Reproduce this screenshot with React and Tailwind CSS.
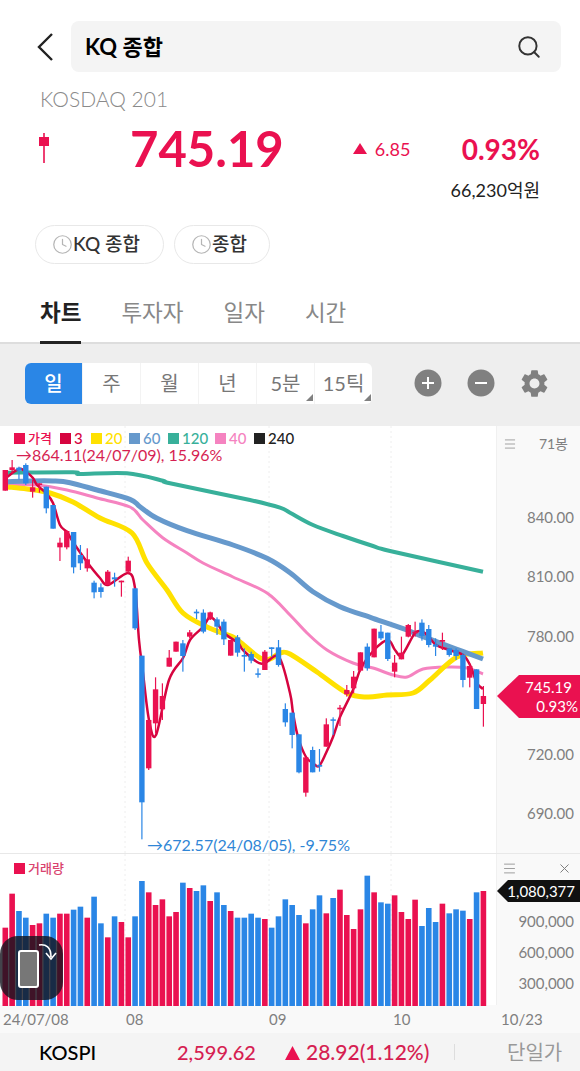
import React from "react";
import { Search, Clock, X, Menu } from "lucide-react";
import { MdSettings } from "react-icons/md";

const RED = "#ea1150";
const BLUE = "#2a86e6";
const FONT = { fontFamily: "Lato, 'Noto Sans CJK KR', sans-serif" };

const barX = (i) => 5.3 + i * 6.83;

// candles: [color, bodyTop, bodyBottom, wickTop, wickBottom], read off at 3x
const crop = (base, rows) =>
  rows.map(([c, a, b, d, e]) => [c, base + a / 3, base + b / 3, base + d / 3, base + e / 3]);

const candles = [
  ...crop(430, [
    ["r", 120, 182, 120, 182], ["r", 112, 120, 90, 130], ["b", 113, 122, 110, 148], ["b", 105, 160, 100, 165],
    ["r", 172, 185, 150, 203], ["r", 160, 165, 160, 188], ["b", 170, 235, 170, 250], ["b", 225, 296, 225, 296],
    ["r", 338, 352, 323, 393], ["r", 303, 352, 300, 358], ["b", 306, 412, 306, 430], ["b", 375, 400, 345, 420],
    ["r", 388, 415, 355, 425], ["b", 458, 487, 452, 505], ["b", 472, 486, 460, 503], ["r", 425, 465, 420, 465],
    ["b", 442, 448, 428, 470], ["r", 452, 457, 452, 500], ["r", 392, 425, 380, 430], ["b", 475, 595, 475, 600],
  ]),
  ...crop(640, [
    ["b", 47, 487, 47, 598], ["r", 240, 385, 240, 390], ["r", 148, 250, 112, 280], ["r", 168, 208, 130, 240],
    ["r", 53, 80, 30, 80], ["r", 5, 35, 5, 35], ["b", 10, 48, 0, 95],
  ]),
  ...crop(430, [
    ["r", 607, 620, 600, 625], ["b", 545, 550, 538, 567], ["b", 548, 605, 538, 610], ["r", 547, 568, 545, 570],
    ["b", 568, 590, 562, 615], ["b", 575, 628, 568, 645],
  ]),
  ...crop(640, [
    ["r", 0, 47, 0, 47], ["b", -8, 38, -15, 50], ["b", 45, 50, 25, 95], ["b", 42, 62, 35, 70], ["b", 100, 104, 85, 113],
    ["r", 35, 90, 30, 90], ["b", 22, 27, 22, 50], ["b", 22, 75, 0, 80], ["b", 207, 247, 190, 260],
  ]),
  ...crop(600, [
    ["b", 338, 405, 338, 445], ["b", 403, 517, 403, 520], ["r", 472, 578, 472, 590], ["b", 450, 517, 440, 517],
    ["b", 495, 500, 447, 515], ["r", 373, 440, 355, 440], ["b", 358, 362, 352, 405], ["r", 323, 328, 315, 378],
    ["r", 270, 283, 255, 290], ["r", 230, 265, 213, 280], ["r", 157, 212, 157, 215], ["b", 140, 205, 130, 212],
    ["r", 86, 172, 86, 172], ["b", 95, 115, 75, 120], ["b", 98, 177, 98, 183], ["r", 188, 215, 165, 232],
    ["r", 158, 178, 110, 178], ["r", 75, 110, 72, 112], ["r", 95, 100, 65, 110], ["b", 68, 108, 58, 122],
    ["b", 87, 135, 75, 142], ["b", 133, 140, 115, 168], ["r", 120, 125, 98, 150], ["b", 145, 165, 145, 170],
    ["b", 150, 168, 145, 180], ["b", 165, 240, 160, 262], ["r", 198, 233, 190, 262], ["b", 208, 327, 208, 327],
    ["r", 288, 312, 258, 380],
  ]),
];

const volumes = [
  ["r", 230], ["r", 128], ["b", 180], ["b", 200], ["r", 222], ["r", 217], ["b", 188], ["b", 200], ["r", 188], ["r", 188],
  ["b", 176], ["b", 167], ["r", 200], ["b", 137], ["b", 217], ["r", 259], ["b", 196], ["r", 213], ["r", 259], ["b", 196],
  ["b", 90], ["r", 124], ["r", 162], ["r", 145], ["r", 196], ["r", 183], ["b", 95], ["r", 111], ["b", 120], ["b", 103],
  ["r", 150], ["b", 124], ["b", 162], ["r", 180], ["b", 200], ["b", 200], ["b", 188], ["b", 200], ["r", 204], ["b", 230],
  ["b", 196], ["b", 145], ["b", 162], ["b", 192], ["r", 217], ["b", 175], ["b", 133], ["r", 187], ["b", 141], ["r", 116],
  ["r", 192], ["r", 234], ["r", 175], ["b", 74], ["r", 124], ["b", 154], ["b", 158], ["r", 133], ["r", 183], ["r", 204],
  ["r", 146], ["b", 225], ["b", 171], ["b", 213], ["r", 158], ["b", 187], ["b", 175], ["b", 179], ["r", 204], ["b", 124],
  ["r", 120],
];

const lines = [
  {
    color: "#38b09a",
    width: 4,
    points: "8,472.7 73,472.3 80,474 127,473.3 163,480.7 170,483.3 250,500 280,507.7 290,512.7 313,525 343,536 373,546 390,551 483,571.7",
  },
  {
    color: "#f583c0",
    width: 3,
    points: "8,485 37,485 67,490 97,498 130,507 143,520 163,538 187,553 203,563 233,577 267,593 290,615 307,633 327,650 353,663 373,668 393,675 407,677 423,669 447,667 467,668 483,674",
  },
  {
    color: "#ffe100",
    width: 5,
    points: "8,487 27,489 50,493 73,502 100,518 132,533 147,563 167,590 183,613 207,627 233,637 240,642 260,658 270,659 280,653 290,654 317,672 347,693 367,697 387,695 413,693 430,680 457,657 483,653",
  },
  {
    color: "#6699cc",
    width: 5,
    points: "8,481.7 30,481 53,481 70,482.7 97,490 130,499.3 140,506.7 157,518.3 187,530.7 233,545 267,558.3 290,572.7 313,591.7 340,606.7 373,618.3 407,630 423,636.7 457,649.3 483,659",
  },
  {
    color: "#d6043f",
    width: 2.5,
    points: "7,477 19,469 26,472 33,478 37,485 46,493 53,503 60,525 67,532 73,542 87,562 100,578 108,585 128,573 135,588 139,640 143,673 149,720 156,735 169,680 183,658 190,640 203,627 210,617 217,623 224,633 238,643 243,650 257,662 265,663 279,657 290,693 293,713 298,737 306,757 313,763 319,766 326,753 333,737 340,717 353,690 361,668 374,650 388,640 395,650 402,655 415,633 423,632 429,637 436,645 449,650 463,655 470,665 477,683 483,689",
  },
];

// catmull-rom so the averages bend like the real chart
const smooth = (points) => {
  const p = points.split(" ").map((s) => s.split(",").map(Number));
  let d = `M${p[0][0]} ${p[0][1]}`;
  for (let i = 0; i < p.length - 1; i++) {
    const a = p[i - 1] || p[i];
    const b = p[i];
    const c = p[i + 1];
    const e = p[i + 2] || c;
    d += ` C${b[0] + (c[0] - a[0]) / 6} ${b[1] + (c[1] - a[1]) / 6} ${c[0] - (e[0] - b[0]) / 6} ${c[1] - (e[1] - b[1]) / 6} ${c[0]} ${c[1]}`;
  }
  return d;
};

const legend = [
  { label: "가격", box: RED, cls: "w-[46px] text-[13px]" },
  { label: "3", box: "#d6043f", cls: "w-[31px] text-[15px]" },
  { label: "20", box: "#ffe100", cls: "w-[38px] text-[15px]" },
  { label: "60", box: "#6699cc", cls: "w-[39px] text-[15px]" },
  { label: "120", box: "#38b09a", cls: "w-[47px] text-[15px]" },
  { label: "40", box: "#f583c0", cls: "w-[39px] text-[15px]" },
  { label: "240", box: "#222222", cls: "w-[42px] text-[15px]" },
];

const segments = ["일", "주", "월", "년", "5분", "15틱"];
const priceLabels = ["840.00", "810.00", "780.00", "", "720.00", "690.00"];
const volumeLabels = ["900,000", "600,000", "300,000"];

const Pill = ({ label, className }) => (
  <div className={`flex items-center h-[39px] rounded-full border border-[#e8e8e8] ${className}`}>
    <Clock size={21} strokeWidth={1.4} color="#b5b5b5" />
    <span className="text-[19px] font-medium text-[#333]">{label}</span>
  </div>
);

const Grid = ({ y1, y2 }) => (
  <>
    {[125, 269, 391].map((x) => (
      <line key={x} x1={x} x2={x} y1={y1} y2={y2} stroke="#eeeeee" strokeDasharray="2 3" />
    ))}
  </>
);

const PriceChart = () => (
  <svg viewBox="0 426 496 427" className="block w-[496px] h-[427px]">
    <Grid y1={426} y2={853} />
    {lines.map((l) => (
      <path key={l.color} d={smooth(l.points)} fill="none" stroke={l.color} strokeWidth={l.width} strokeLinejoin="round" />
    ))}
    {candles.map(([c, top, bottom, wickTop, wickBottom], i) => {
      const fill = c === "r" ? RED : BLUE;
      return (
        <g key={i} fill={fill}>
          <rect x={barX(i) - 0.6} y={wickTop} width={1.2} height={wickBottom - wickTop} />
          <rect x={barX(i) - 2.7} y={top} width={5.4} height={Math.max(bottom - top, 1.5)} />
        </g>
      );
    })}
  </svg>
);

const VolumeChart = () => (
  <svg viewBox="0 853 496 152" className="block w-[496px] h-[152px]">
    <Grid y1={853} y2={1005} />
    {volumes.map(([c, top], i) => (
      <rect
        key={i}
        x={barX(i) - 2.8}
        y={850 + top / 3}
        width={5.6}
        height={1005 - 850 - top / 3}
        fill={c === "r" ? RED : BLUE}
      />
    ))}
  </svg>
);

const App = () => {
  return (
    <div className="w-[580px] h-[1071px] overflow-hidden bg-white flex flex-col relative" style={FONT}>
      {/* search bar */}
      <div className="flex items-center pt-[21px] pl-[36px] pr-[19px]">
        <svg width="18" height="30" viewBox="0 0 18 30" className="mr-[17px]">
          <path d="M16 2 L3 15 L16 28" fill="none" stroke="#222" strokeWidth="2.4" />
        </svg>
        <div className="flex-1 h-[51px] rounded-[8px] bg-[#f4f4f4] flex items-center justify-between pl-[14px] pr-[19px]">
          <span className="text-[22px] font-bold text-black">KQ 종합</span>
          <Search size={26} strokeWidth={1.8} color="#333" />
        </div>
      </div>

      {/* quote */}
      <div className="pl-[40px] pt-[14px] text-[21px] leading-[26px] font-light text-[#8a8a8a]">KOSDAQ 201</div>
      <div className="flex items-start h-[50px] mt-[18px] pl-[38px] pr-[40px]">
        <svg width="12" height="32" viewBox="0 0 12 32" className="mt-[3px]">
          <rect x="5.2" y="0" width="1.6" height="30" fill={RED} />
          <rect x="1" y="4" width="10" height="9" fill={RED} />
        </svg>
        <span className="ml-[80px] text-[49px] leading-[36px] font-bold text-[#ea1150]">745.19</span>
        <svg width="14" height="11" viewBox="0 0 14 11" className="ml-[69px] mt-[13px]">
          <path d="M7 0 L14 11 L0 11 Z" fill={RED} />
        </svg>
        <span className="ml-[8px] mt-[7px] text-[18px] leading-[24px] text-[#ea1150]">6.85</span>
        <span className="ml-auto mt-[2px] text-[28px] leading-[34px] font-bold text-[#ea1150]">0.93%</span>
      </div>
      <div className="text-right pr-[40px] -mt-[2px] text-[18px] leading-[24px] text-[#222]">66,230억원</div>

      <div className="flex gap-[10px] pl-[35px] mt-[23px]">
        <Pill label="KQ 종합" className="w-[129px] pl-[16px]" />
        <Pill label="종합" className="w-[96px] pl-[16px]" />
      </div>

      {/* tabs */}
      <div className="flex gap-[40px] pl-[40px] mt-[29px] h-[51px] border-b-2 border-[#dddddd] text-[22.5px]">
        <div className="h-[51px] border-b-[3px] border-[#222] font-bold text-[#222] leading-[40px]">차트</div>
        <div className="text-[#888] leading-[40px]">투자자</div>
        <div className="text-[#888] leading-[40px]">일자</div>
        <div className="text-[#888] leading-[40px]">시간</div>
      </div>

      {/* period toolbar */}
      <div className="h-[82px] bg-[#eeeeee] flex items-center pl-[25px] pb-[4px]">
        <div className="flex w-[347px] h-[41px] rounded-[6px] bg-white overflow-hidden">
          {segments.map((s, i) => (
            <div
              key={s}
              className={`relative flex-1 flex items-center justify-center text-[20px] border-r border-[#f3f3f3] last:border-r-0 ${
                i === 0 ? "bg-[#2a86e6] text-white font-medium" : "text-[#777]"
              }`}
            >
              {s}
              {i > 3 && (
                <span className="absolute right-[1px] bottom-[3px] w-0 h-0 border-l-[7px] border-l-transparent border-b-[7px] border-b-[#808080]" />
              )}
            </div>
          ))}
        </div>
        <svg width="28" height="28" viewBox="0 0 28 28" className="ml-[42px]">
          <circle cx="14" cy="14" r="13.5" fill="#808080" />
          <path d="M8 14 H20 M14 8 V20" stroke="#fff" strokeWidth="2" />
        </svg>
        <svg width="28" height="28" viewBox="0 0 28 28" className="ml-[25px]">
          <circle cx="14" cy="14" r="13.5" fill="#808080" />
          <path d="M8 14 H20" stroke="#fff" strokeWidth="2" />
        </svg>
        <MdSettings size={33} color="#808080" className="ml-[23px]" />
      </div>

      {/* chart + axis */}
      <div className="flex h-[427px]">
        <div className="w-[496px] relative">
          <div className="absolute left-[14px] top-[5px] flex items-center font-medium">
            {legend.map((item) => (
              <div key={item.label} className={`flex items-center gap-[3px] leading-[14px] ${item.cls}`}>
                <span className="w-[11px] h-[11px]" style={{ backgroundColor: item.box }} />
                <span style={{ color: item.box }}>{item.label}</span>
              </div>
            ))}
          </div>
          <div className="absolute left-[16px] top-[21px] text-[16px] leading-[15px] text-[#d61f52]">
            →864.11(24/07/09), 15.96%
          </div>
          <div className="absolute left-[147px] top-[410px] text-[16px] leading-[18px] text-[#2f86d6]">
            →672.57(24/08/05), -9.75%
          </div>
          <PriceChart />
        </div>
        <div className="flex-1 bg-[#f9f9f9] border-l border-[#f0f0f0] relative text-[#808080]">
          <div className="flex items-center justify-between pl-[6px] pr-[12px] pt-[7px] h-[28px] text-[14px]">
            <Menu size={14} strokeWidth={1.2} />
            <span>71봉</span>
          </div>
          <div className="pt-[53px] pr-[6px] text-right text-[15px] leading-[20px]">
            {priceLabels.map((label, i) => (
              <div key={i} className="h-[59.3px]">
                {label}
              </div>
            ))}
          </div>
          <div className="absolute left-0 top-[249px]">
            <svg width="84" height="43" viewBox="0 0 84 43" className="block">
              <path d="M0 21 L22 0 H84 V43 H22 Z" fill={RED} />
            </svg>
            <div className="absolute right-[9px] top-[2px] text-[15px] leading-[20px] text-white">745.19</div>
            <div className="absolute right-[3px] top-[21px] text-[15px] leading-[20px] text-white">0.93%</div>
          </div>
        </div>
      </div>

      {/* volume + axis */}
      <div className="flex h-[152px] border-t border-[#e8e8e8]">
        <div className="w-[496px] relative">
          <div className="absolute left-[14px] top-[6px] flex items-center gap-[3px] text-[13px] leading-[16px] font-medium text-[#d9436f]">
            <span className="w-[11px] h-[11px] bg-[#ea1150]" />
            거래량
          </div>
          <VolumeChart />
        </div>
        <div className="flex-1 bg-[#f9f9f9] border-l border-[#f0f0f0] relative text-[#808080]">
          <div className="flex items-center justify-between h-[28px] pl-[5px] pr-[8px] text-[13px]">
            <Menu size={15} strokeWidth={1.2} />
            <X size={15} strokeWidth={1.6} />
          </div>
          <div className="pt-[29px] pr-[6px] text-right text-[15px] leading-[20px]">
            {volumeLabels.map((label) => (
              <div key={label} className="h-[31px]">
                {label}
              </div>
            ))}
          </div>
          <div className="absolute left-0 top-[26px] w-[84px] h-[22px]">
            <svg width="84" height="22" viewBox="0 0 84 22" className="block">
              <path d="M0 11 L11 0 H84 V22 H11 Z" fill="#111" />
            </svg>
            <div className="absolute right-[6px] top-0 text-[15px] leading-[22px] text-white">1,080,377</div>
          </div>
        </div>
      </div>

      {/* date axis */}
      <div className="h-[28px] bg-[#f9f9f9] flex items-center text-[15px] text-[#808080]">
        <span className="ml-[3px] w-[123px]">24/07/08</span>
        <span className="w-[143px]">08</span>
        <span className="w-[124px]">09</span>
        <span className="w-[108px]">10</span>
        <span>10/23</span>
      </div>

      {/* footer ticker */}
      <div className="h-[38px] bg-[#f4f4f4] flex items-center">
        <span className="ml-[39px] w-[138px] text-[20px] font-medium text-black">KOSPI</span>
        <span className="w-[108px] text-[20px] font-medium text-[#d61f52]">2,599.62</span>
        <svg width="15" height="15" viewBox="0 0 15 15">
          <path d="M7.5 1 L15 15 L0 15 Z" fill={RED} />
        </svg>
        <span className="ml-[6px] w-[148px] text-[21px] font-medium text-[#d61f52]">28.92(1.12%)</span>
        <span className="w-px h-[16px] bg-[#dddddd]" />
        <span className="ml-[52px] text-[20px] text-[#999]">단일가</span>
      </div>

      {/* rotate button */}
      <div className="absolute left-0 top-[936px] w-[63px] h-[64px] rounded-[18px] bg-[rgba(20,20,30,0.8)] flex items-center justify-center">
        <svg width="63" height="64" viewBox="0 0 63 64">
          <rect x="19" y="15" width="19" height="36" rx="2" fill="#777" stroke="#fff" strokeWidth="2" />
          <path d="M39 9 C46 8 51 11 51 21 M46 17 L51 23 L56 17" fill="none" stroke="#fff" strokeWidth="1.6" />
        </svg>
      </div>
    </div>
  );
};

export default App;
